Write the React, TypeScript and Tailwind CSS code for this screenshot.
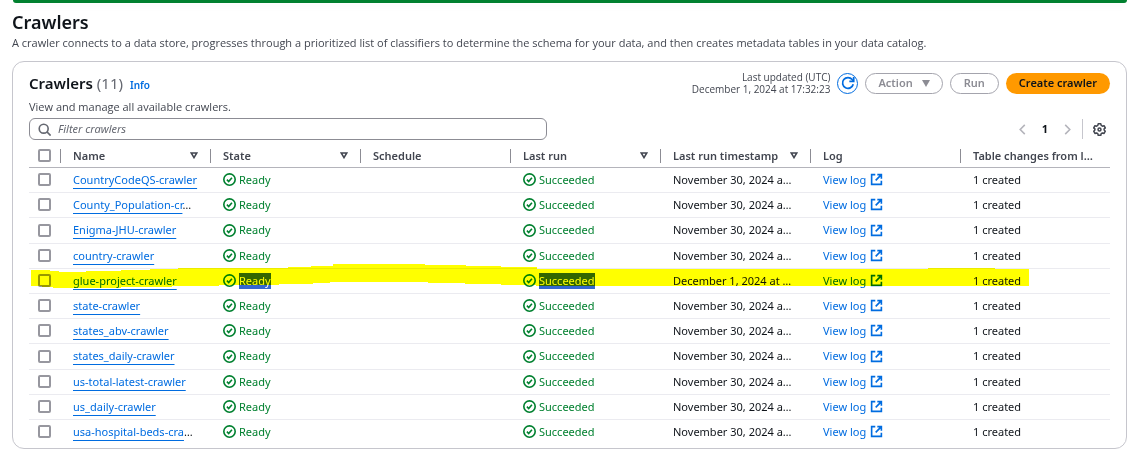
import type { ReactNode } from "react";

type Crawler = { name: string; clipped?: boolean; timestamp: string; active?: boolean };

const NOV = "November 30, 2024 a…";

const crawlers: Crawler[] = [
  { name: "CountryCodeQS-crawler", timestamp: NOV },
  { name: "County_Population-cr", clipped: true, timestamp: NOV },
  { name: "Enigma-JHU-crawler", timestamp: NOV },
  { name: "country-crawler", timestamp: NOV },
  { name: "glue-project-crawler", timestamp: "December 1, 2024 at …", active: true },
  { name: "state-crawler", timestamp: NOV },
  { name: "states_abv-crawler", timestamp: NOV },
  { name: "states_daily-crawler", timestamp: NOV },
  { name: "us-total-latest-crawler", timestamp: NOV },
  { name: "us_daily-crawler", timestamp: NOV },
  { name: "usa-hospital-beds-cra", clipped: true, timestamp: NOV },
];

const columns = [
  { label: "Name", sortable: true },
  { label: "State", sortable: true },
  { label: "Schedule", sortable: false },
  { label: "Last run", sortable: true },
  { label: "Last run timestamp", sortable: true },
  { label: "Log", sortable: false },
  { label: "Table changes from l…", sortable: false },
];

function CheckIcon() {
  return (
    <svg viewBox="0 0 16 16" className="size-[13px] shrink-0" fill="none" stroke="currentColor" strokeWidth="2" aria-hidden="true">
      <circle cx="8" cy="8" r="7" />
      <path d="M4.800 8.200 7 10.400l4-4.600" />
    </svg>
  );
}

function ExternalIcon() {
  return (
    <svg viewBox="0 0 16 16" className="size-[13px] shrink-0" fill="none" stroke="currentColor" strokeWidth="2" aria-hidden="true">
      <path d="M6.500 2H2v12h12V9.500" />
      <path d="M9 2h5v5M14 2 7 9" />
    </svg>
  );
}

function Status({ children, selected }: { children: ReactNode; selected?: boolean }) {
  return (
    <span className="flex items-center gap-[3px] text-[#00802f]">
      <CheckIcon />
      <span className={selected ? "bg-[#3367d1] text-white" : ""}>{children}</span>
    </span>
  );
}

function Checkbox({ label }: { label: string }) {
  return (
    <input
      type="checkbox"
      aria-label={label}
      className="block size-[13px] appearance-none rounded-[2px] border-2 border-[#97979f] bg-white checked:bg-[#006ce0]"
    />
  );
}

function Highlight() {
  return (
    <svg
      viewBox="0 0 998 24"
      preserveAspectRatio="none"
      className="pointer-events-none absolute -top-[5px] left-[2px] h-[24px] w-[998px] max-w-none mix-blend-multiply"
      aria-hidden="true"
    >
      <path
        fill="#ffff00"
        d="M0 6h19v1h9v1h27v-1h35v-1h29v-1h28v-1h110V3h23V2h22V0h92v1h41v1h35v1h36v2h391V4h67v1h35v1h1v16H505v-1h-35v-1h-36v-1h-37v-1h-98v1h-17v1h-34v1h-60v1h-47v1h-51v1H22v-1H11v-1H0z"
      />
    </svg>
  );
}

export default function App() {
  return (
    <main className="overflow-hidden bg-white pb-[21px] font-['Noto_Sans','Open_Sans',sans-serif] text-[11px] leading-4 text-[#0f141a]">
      <div className="mx-[13px] h-[3px] rounded-b-lg bg-[#00802f] shadow-md" />
      <header className="px-[12px] pt-[7px]">
        <h1 className="text-[18px] leading-6 font-semibold">Crawlers</h1>
        <p className="mt-px font-['Open_Sans','Noto_Sans',sans-serif] text-[#424650]">
          A crawler connects to a data store, progresses through a prioritized list of classifiers to determine the
          schema for your data, and then creates metadata tables in your data catalog.
        </p>
      </header>

      <section className="mr-[13px] ml-[12px] mt-[10px] rounded-xl border border-[#c6c6cd] px-4 pb-[4px]">
        <div className="flex items-start justify-between pt-[9px]">
          <div>
            <div className="flex items-baseline gap-[7px]">
              <h2 className="text-[15px] leading-6 font-semibold">
                Crawlers <span className="font-normal text-[#656871]">(11)</span>
              </h2>
              <a href="#info" className="text-[10px] font-semibold text-[#006ce0]">
                Info
              </a>
            </div>
            <p className="mt-[4px] font-['Open_Sans','Noto_Sans',sans-serif] text-[#424650]">
              View and manage all available crawlers.
            </p>
          </div>
          <div className="flex items-center gap-[7px]">
            <p className="text-right font-['Open_Sans','Noto_Sans',sans-serif] text-[10px] leading-3 text-[#424650]">
              Last updated (UTC)
              <br />
              December 1, 2024 at 17:32:23
            </p>
            <button
              type="button"
              aria-label="Refresh"
              className="flex size-[21px] items-center justify-center rounded-full border border-[#006ce0] text-[#006ce0]"
            >
              <svg viewBox="0 0 16 16" className="size-[14px]" fill="none" stroke="currentColor" strokeWidth="2" aria-hidden="true">
                <path d="M14 9.500A6.200 6.200 0 1 1 12.800 4l1.400 1.600" />
                <path d="M14.500 1v5h-5" />
              </svg>
            </button>
            <button
              type="button"
              className="flex h-[21px] items-center gap-[9px] rounded-full border border-[#a4a4ad] px-3 font-semibold text-[#8c8c94]"
            >
              Action
              <svg viewBox="0 0 8 7" className="h-[7px] w-[8px]" fill="currentColor" aria-hidden="true">
                <path d="M0 0h8L4 7z" />
              </svg>
            </button>
            <button
              type="button"
              className="flex h-[21px] items-center rounded-full border border-[#a4a4ad] px-[13px] font-semibold text-[#8c8c94]"
            >
              Run
            </button>
            <button type="button" className="flex h-[21px] items-center rounded-full bg-[#ff9900] px-[13px] font-semibold">
              Create crawler
            </button>
          </div>
        </div>

        <div className="mt-[3px] flex items-center justify-between">
          <label className="flex h-[22px] w-[518px] items-center gap-[7px] rounded-md border border-[#8c8c94] px-2">
            <svg viewBox="0 0 16 16" className="size-[13px] text-[#656871]" fill="none" stroke="currentColor" strokeWidth="2" aria-hidden="true">
              <circle cx="7" cy="7" r="5.500" />
              <path d="m11 11 4.500 4.500" />
            </svg>
            <input
              type="text"
              aria-label="Filter crawlers"
              placeholder="Filter crawlers"
              className="min-w-0 flex-1 outline-none placeholder:text-[#656871] placeholder:italic"
            />
          </label>
          <div className="flex items-center pr-1 text-[#b4b4bb]">
            <button type="button" aria-label="Previous page">
              <svg viewBox="0 0 7 12" className="h-[11px] w-[7px]" fill="none" stroke="currentColor" strokeWidth="1.700" aria-hidden="true">
                <path d="M6 1 1 6l5 5" />
              </svg>
            </button>
            <button type="button" className="px-4 font-bold text-[#0f141a]">
              1
            </button>
            <button type="button" aria-label="Next page">
              <svg viewBox="0 0 7 12" className="h-[11px] w-[7px]" fill="none" stroke="currentColor" strokeWidth="1.700" aria-hidden="true">
                <path d="m1 1 5 5-5 5" />
              </svg>
            </button>
            <span className="mr-[10px] ml-[11px] h-5 w-px bg-[#c6c6cd]" />
            <button type="button" aria-label="Preferences" className="text-[#424650]">
              <svg viewBox="0 0 16 16" className="size-[13px]" fill="none" stroke="currentColor" strokeWidth="1.900" strokeLinejoin="round" aria-hidden="true">
                <path d="M6.400 1h3.200l.5 2 1.500.9 2-.6 1.500 2.700-1.400 1.300v1.400l1.400 1.400-1.500 2.700-2-.6-1.500.9-.5 1.900H6.400l-.5-1.900-1.500-.9-2 .6L.9 10.100l1.400-1.400V7.300L.9 6l1.500-2.700 2 .6 1.500-.9z" />
                <circle cx="8" cy="8" r="1.800" />
              </svg>
            </button>
          </div>
        </div>

        <table className="mt-[5px] w-full table-fixed border-collapse">
          <colgroup>
            <col className="w-[31px]" />
            <col className="w-[150px]" />
            <col className="w-[150px]" />
            <col className="w-[150px]" />
            <col className="w-[150px]" />
            <col className="w-[150px]" />
            <col className="w-[150px]" />
            <col />
          </colgroup>
          <thead>
            <tr className="h-[22px] border-b border-[#b4b4bb] text-[#424650]">
              <th className="p-0 pl-[9px]">
                <Checkbox label="Select all crawlers" />
              </th>
              {columns.map((column) => (
                <th key={column.label} scope="col" className="p-0 text-left font-semibold">
                  <div className="flex h-[14px] items-center justify-between border-l border-[#8c8c94] pr-3 pl-3">
                    <span className="whitespace-nowrap">{column.label}</span>
                    {column.sortable && (
                      <svg viewBox="0 0 8 7" className="h-[7px] w-[8px] shrink-0" fill="none" stroke="currentColor" strokeWidth="1.600" aria-hidden="true">
                        <path d="M1.200 1h5.600L4 5.600z" />
                      </svg>
                    )}
                  </div>
                </th>
              ))}
            </tr>
          </thead>
          <tbody>
            {crawlers.map((crawler) => (
              <tr key={crawler.name} className="h-[25px] border-b border-[#ebebf0] last:border-0 nth-[5n+3]:h-[26px]">
                <td className="relative p-0 pl-[9px]">
                  <Checkbox label={`Select ${crawler.name}`} />
                  {crawler.active && <Highlight />}
                </td>
                <td className="p-0 pl-[13px] whitespace-nowrap">
                  <a href={`#${crawler.name}`} className="text-[#006ce0] underline underline-offset-4">
                    {crawler.name}
                  </a>
                  {crawler.clipped && "…"}
                </td>
                <td className="p-0 pl-[13px]">
                  <Status selected={crawler.active}>Ready</Status>
                </td>
                <td className="p-0" />
                <td className="p-0 pl-[13px]">
                  <Status selected={crawler.active}>Succeeded</Status>
                </td>
                <td className="p-0 pl-[13px] whitespace-nowrap">{crawler.timestamp}</td>
                <td className="p-0 pl-[13px]">
                  <a href={`#log-${crawler.name}`} className="flex items-center gap-[4px] text-[#006ce0]">
                    View log
                    <ExternalIcon />
                  </a>
                </td>
                <td className="p-0 pl-[13px]">1 created</td>
              </tr>
            ))}
          </tbody>
        </table>
      </section>
    </main>
  );
}
